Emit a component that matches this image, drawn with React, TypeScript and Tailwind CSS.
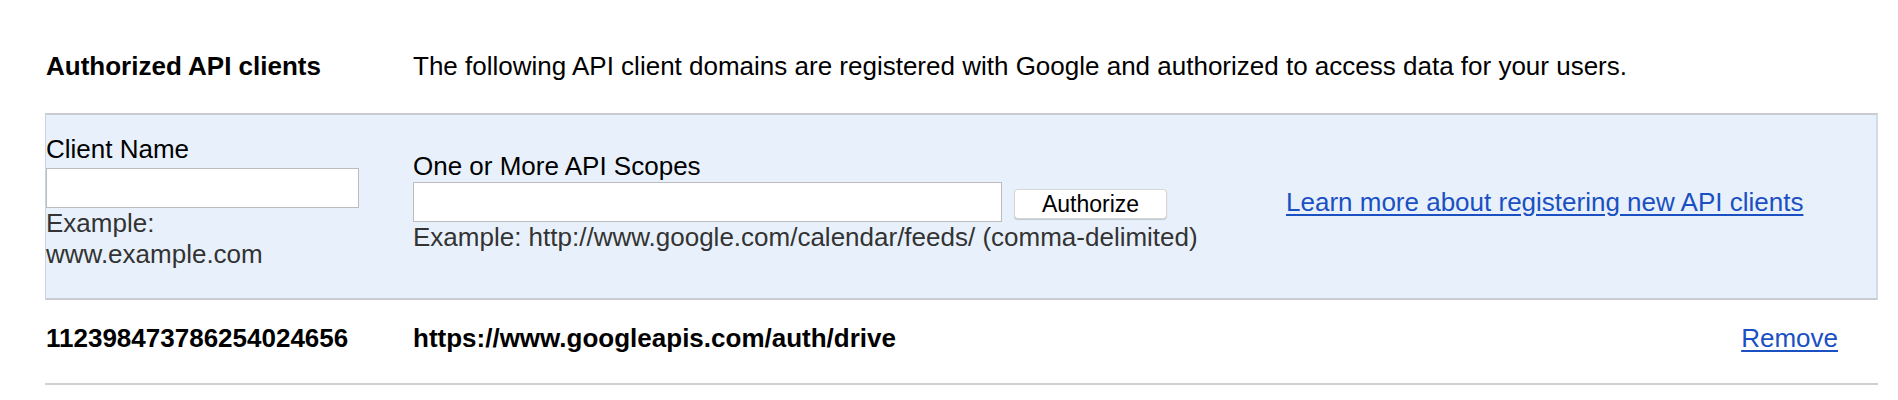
import React from 'react';

// Authorized API clients section
export default function App() {
  return (
    <div className="w-[1898px] h-[400px] bg-white text-black font-['Liberation_Sans',Arial,Helvetica,sans-serif] text-[26px] leading-[30px]">
      <div className="ml-[45px] w-[1833px] pt-[51px]">
        {/* Header */}
        <div className="flex">
          <div className="w-[368px] pl-[1px] font-bold">Authorized API clients</div>
          <div>
            The following API client domains are registered with Google and authorized to access data for your users.
          </div>
        </div>

        {/* Add client form */}
        <div className="mt-[32px] h-[187px] flex items-center pb-[9px] bg-[#e8f1fb] border-t-2 border-b-2 border-l border-r-2 border-t-[#c9cbce] border-b-[#c9cbce] border-l-[#c9d5e6] border-r-[#d2dce8]">
          <div className="w-[367px] shrink-0">
            <div className="leading-[31px]">Client Name</div>
            <input
              type="text"
              className="mt-[3px] block h-[40px] w-[313px] bg-white border border-[#bcbcbc] outline-none"
            />
            <div className="w-[320px] leading-[31px] text-[#333]">Example: www.example.com</div>
          </div>

          <div className="w-[873px] shrink-0">
            <div className="leading-[31px]">One or More API Scopes</div>
            <div className="flex items-start gap-[12px]">
              <input
                type="text"
                className="block h-[40px] w-[589px] bg-white border border-[#bcbcbc] outline-none"
              />
              <button className="mt-[7px] h-[30px] w-[153px] bg-white border border-[#d6d6d6] rounded-[4px] shadow-[0_1px_1px_rgba(0,0,0,0.18)] text-[23px] leading-[28px] text-black">
                Authorize
              </button>
            </div>
            <div className="leading-[31px] text-[#333]">
              Example: http://www.google.com/calendar/feeds/ (comma-delimited)
            </div>
          </div>

          <a href="#" className="text-[#1a50c2] underline underline-offset-[3px]">
            Learn more about registering new API clients
          </a>
        </div>

        {/* Existing client */}
        <div className="flex items-center pt-[23px] pb-[30px] border-b-2 border-[#d0d0d0]">
          <div className="w-[368px] pl-[1px] font-bold">112398473786254024656</div>
          <div className="flex-1 font-bold">https://www.googleapis.com/auth/drive</div>
          <a href="#" className="mr-[40px] text-[#1a50c2] underline underline-offset-[3px]">
            Remove
          </a>
        </div>
      </div>
    </div>
  );
}
